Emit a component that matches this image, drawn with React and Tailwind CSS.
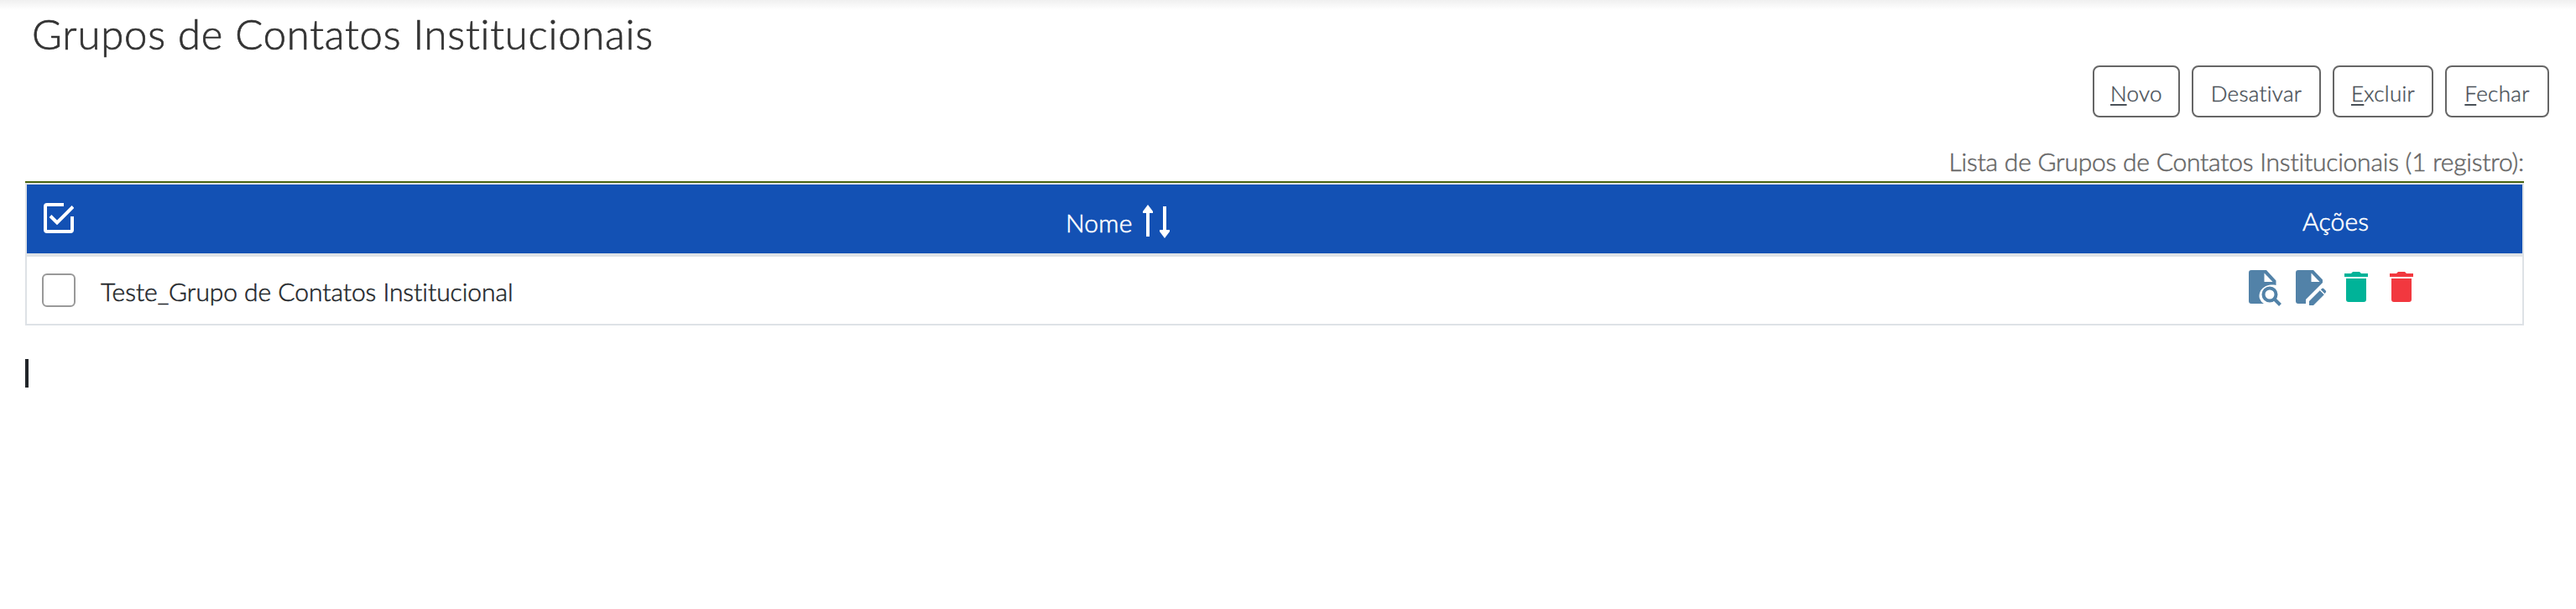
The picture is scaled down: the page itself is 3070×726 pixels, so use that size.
function ActionButton({ hot, rest, className }) {
  return (
    <button className={'flex h-[62px] items-center justify-center rounded-[8px] border-2 border-[#666] pt-[3px] text-[26px] leading-none font-light tracking-[0.3px] text-[#495057] [-webkit-text-stroke:0.4px] ' + className}>
      <span>
        {hot && <u className="underline decoration-2 underline-offset-[3px]">{hot}</u>}
        {rest}
      </span>
    </button>
  );
}

function SelectAllIcon() {
  return (
    <svg viewBox="0 0 36 36" className="mt-[22px] h-9 w-9" fill="none" stroke="currentColor" strokeWidth="4">
      <path d="M24 2H4a2 2 0 0 0-2 2v28a2 2 0 0 0 2 2h28a2 2 0 0 0 2-2V16M8 15.5l8 8L35 4.5" />
    </svg>
  );
}

function SortIcon() {
  return (
    <svg viewBox="0 0 32 40" className="mt-[24px] ml-[10px] h-10 w-8" fill="currentColor">
      <path d="M6 0l6 8v2H8v28H4V10H0V8zM24 2h4v28h4v2l-6 8-6-8v-2h4z" />
    </svg>
  );
}

function ViewIcon() {
  return (
    <svg viewBox="0 0 40 44" className="h-11 w-10" fill="none">
      <path d="M3 0h18l11.500 12.500V18C20 15.500 10.500 24 13 34q1.500 4 5 6H3a3 3 0 0 1-3-3V3a3 3 0 0 1 3-3z" fill="#5282a8" />
      <path d="M18.500 3.500v10.500H28.500z" fill="#fff" />
      <circle cx="25" cy="29" r="7.500" stroke="#5282a8" strokeWidth="4" />
      <path d="M30.500 34.500l7 7" stroke="#5282a8" strokeWidth="4" />
    </svg>
  );
}

function EditIcon() {
  return (
    <svg viewBox="0 0 38 44" className="h-11 w-[38px]" fill="#5282a8">
      <path d="M3 0h18l11 11.500V15L12 35v5H3a3 3 0 0 1-3-3V3a3 3 0 0 1 3-3z" />
      <path d="M18.500 3.500v10.500H28.500z" fill="#fff" />
      <path d="M16 37L28.800 24.200l5 5L21 42H16zM29.800 23.200l1.400-1.200q1-.8 2 0l2.600 2.600q.8 1 0 2l-1.200 1.400z" />
    </svg>
  );
}

function TrashIcon({ className }) {
  return (
    <svg viewBox="0 0 28 36" className={'mt-[2px] h-9 w-7 ' + className} fill="currentColor">
      <path d="M0 2h8l2-2h8l2 2h8v4H0zM2 8h24v25a3 3 0 0 1-3 3H5a3 3 0 0 1-3-3z" />
    </svg>
  );
}

export default function App() {
  return (
    <div className="h-[726px] w-[3070px] overflow-hidden bg-white font-['Lato','Open_Sans',sans-serif] text-[#212529]">
      <div className="h-3 bg-linear-to-b from-[#f0f0f0] to-white" />
      <h1 className="ml-[38px] h-[66px] text-[49px] leading-[56px] font-light tracking-[0.8px] whitespace-nowrap text-[#333] [-webkit-text-stroke:0.7px]">
        Grupos de Contatos Institucionais
      </h1>
      <div className="mr-8 flex justify-end gap-[14px]">
        <ActionButton hot="N" rest="ovo" className="w-[104px]" />
        <ActionButton rest="Desativar" className="w-[154px]" />
        <ActionButton hot="E" rest="xcluir" className="w-[120px]" />
        <ActionButton hot="F" rest="echar" className="w-[124px]" />
      </div>
      <div className="mr-[62px] ml-[30px]">
        <div className="h-[78px] border-b-2 border-[#4a6410] pt-[34px] text-right text-[30px] leading-[36px] font-light tracking-[-0.22px] text-[#666] [-webkit-text-stroke:0.5px]">
          Lista de Grupos de Contatos Institucionais (1 registro):
        </div>
        <div className="border-2 border-[#dee2e6]">
          <div className="flex h-[86px] items-start border-b-4 border-[#dee2e6] bg-[#1351b4] pl-5 text-[30px] leading-[36px] font-light tracking-[0.2px] text-white [-webkit-text-stroke:0.6px]">
            <SelectAllIcon />
            <div className="flex w-[2472px] items-start pl-[1182px]">
              <span className="mt-[27px] w-[82px] whitespace-nowrap">Nome</span>
              <SortIcon />
            </div>
            <span className="mt-[25px] ml-[184px]">Ações</span>
          </div>
          <div className="flex h-[80px] items-start pl-[18px]">
            <span className="mt-5 h-10 w-10 rounded-[6px] border-2 border-[#999] bg-white" />
            <span className="mt-[23px] ml-[30px] w-[2560px] text-[30px] leading-[36px] font-light tracking-[-0.05px] whitespace-nowrap [-webkit-text-stroke:0.5px]">
              Teste_Grupo de Contatos Institucional
            </span>
            <div className="mt-4 flex items-start">
              <span className="w-14"><ViewIcon /></span>
              <span className="w-[58px]"><EditIcon /></span>
              <span className="w-[54px]"><TrashIcon className="text-[#00b398]" /></span>
              <TrashIcon className="text-[#f2383f]" />
            </div>
          </div>
        </div>
        <div className="mt-10 h-[34px] w-1 bg-[#212529]" />
      </div>
    </div>
  );
}
